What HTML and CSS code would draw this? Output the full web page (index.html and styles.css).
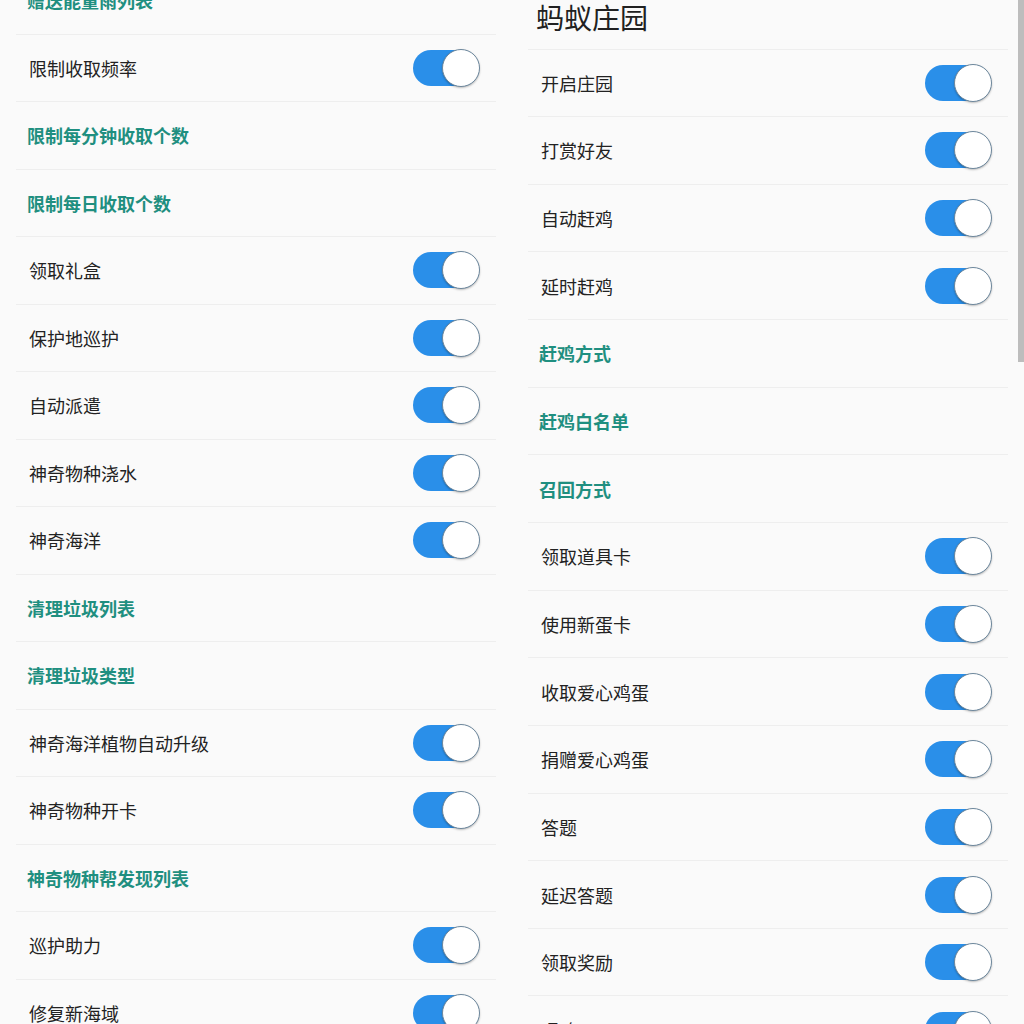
FILE: index.html
```html
<!DOCTYPE html>
<html lang="zh">
<head>
<meta charset="utf-8">
<link rel="stylesheet" href="styles.css">
</head>
<body>
<div class="page">
  <div class="col col-left">
    <div class="row header">赠送能量雨列表</div>
    <div class="row"><span class="label">限制收取频率</span><span class="switch"></span></div>
    <div class="row header">限制每分钟收取个数</div>
    <div class="row header">限制每日收取个数</div>
    <div class="row"><span class="label">领取礼盒</span><span class="switch"></span></div>
    <div class="row"><span class="label">保护地巡护</span><span class="switch"></span></div>
    <div class="row"><span class="label">自动派遣</span><span class="switch"></span></div>
    <div class="row"><span class="label">神奇物种浇水</span><span class="switch"></span></div>
    <div class="row"><span class="label">神奇海洋</span><span class="switch"></span></div>
    <div class="row header">清理垃圾列表</div>
    <div class="row header">清理垃圾类型</div>
    <div class="row"><span class="label">神奇海洋植物自动升级</span><span class="switch"></span></div>
    <div class="row"><span class="label">神奇物种开卡</span><span class="switch"></span></div>
    <div class="row header">神奇物种帮发现列表</div>
    <div class="row"><span class="label">巡护助力</span><span class="switch"></span></div>
    <div class="row"><span class="label">修复新海域</span><span class="switch"></span></div>
  </div>
  <div class="col col-right">
    <div class="title">蚂蚁庄园</div>
    <div class="row"><span class="label">开启庄园</span><span class="switch"></span></div>
    <div class="row"><span class="label">打赏好友</span><span class="switch"></span></div>
    <div class="row"><span class="label">自动赶鸡</span><span class="switch"></span></div>
    <div class="row"><span class="label">延时赶鸡</span><span class="switch"></span></div>
    <div class="row header">赶鸡方式</div>
    <div class="row header">赶鸡白名单</div>
    <div class="row header">召回方式</div>
    <div class="row"><span class="label">领取道具卡</span><span class="switch"></span></div>
    <div class="row"><span class="label">使用新蛋卡</span><span class="switch"></span></div>
    <div class="row"><span class="label">收取爱心鸡蛋</span><span class="switch"></span></div>
    <div class="row"><span class="label">捐赠爱心鸡蛋</span><span class="switch"></span></div>
    <div class="row"><span class="label">答题</span><span class="switch"></span></div>
    <div class="row"><span class="label">延迟答题</span><span class="switch"></span></div>
    <div class="row"><span class="label">领取奖励</span><span class="switch"></span></div>
    <div class="row"><span class="label">喂鸡</span><span class="switch"></span></div>
  </div>
</div>
<div class="scrollbar"></div>
</body>
</html>
```

FILE: styles.css
```css
html, body {
  margin: 0;
  padding: 0;
  background: #fafafa;
  height: 1024px;
  overflow: hidden;
  font-family: "Noto Sans CJK SC", "Noto Sans", sans-serif;
}
.page {
  display: grid;
  grid-template-columns: 480px 480px;
  column-gap: 32px;
  padding: 0 16px;
}
.col {
  display: flex;
  flex-direction: column;
}
.col-left {
  margin-top: -33px;
}
.title {
  height: 49.5px;
  box-sizing: border-box;
  padding-left: 8px;
  font-size: 28px;
  line-height: 34px;
  color: #212121;
  border-bottom: 1.5px solid #eeeeee;
}
.row {
  height: 67.5px;
  box-sizing: border-box;
  border-bottom: 1.5px solid #eeeeee;
  display: flex;
  align-items: center;
  justify-content: space-between;
  padding: 0 17px 0 13px;
  font-size: 18px;
  color: #222222;
}
.col-right .row {
  height: 67.65px;
}
.row.header {
  padding-left: 11px;
  color: #1f8f80;
  font-weight: 700;
}
.label {
  line-height: 24px;
}
.switch {
  position: relative;
  width: 66px;
  height: 36px;
  border-radius: 18px;
  background: #2a8fe9;
  box-sizing: border-box;
}
.switch::after {
  content: "";
  position: absolute;
  right: -1px;
  top: -1px;
  width: 36px;
  height: 36px;
  border-radius: 50%;
  background: #ffffff;
  border: 1.5px solid #6d879c;
  box-shadow: 0 1px 2px rgba(0,0,0,0.25);
}
.scrollbar {
  position: absolute;
  right: 0;
  top: 0;
  width: 6px;
  height: 362px;
  background: #bdbdbd;
}
```
